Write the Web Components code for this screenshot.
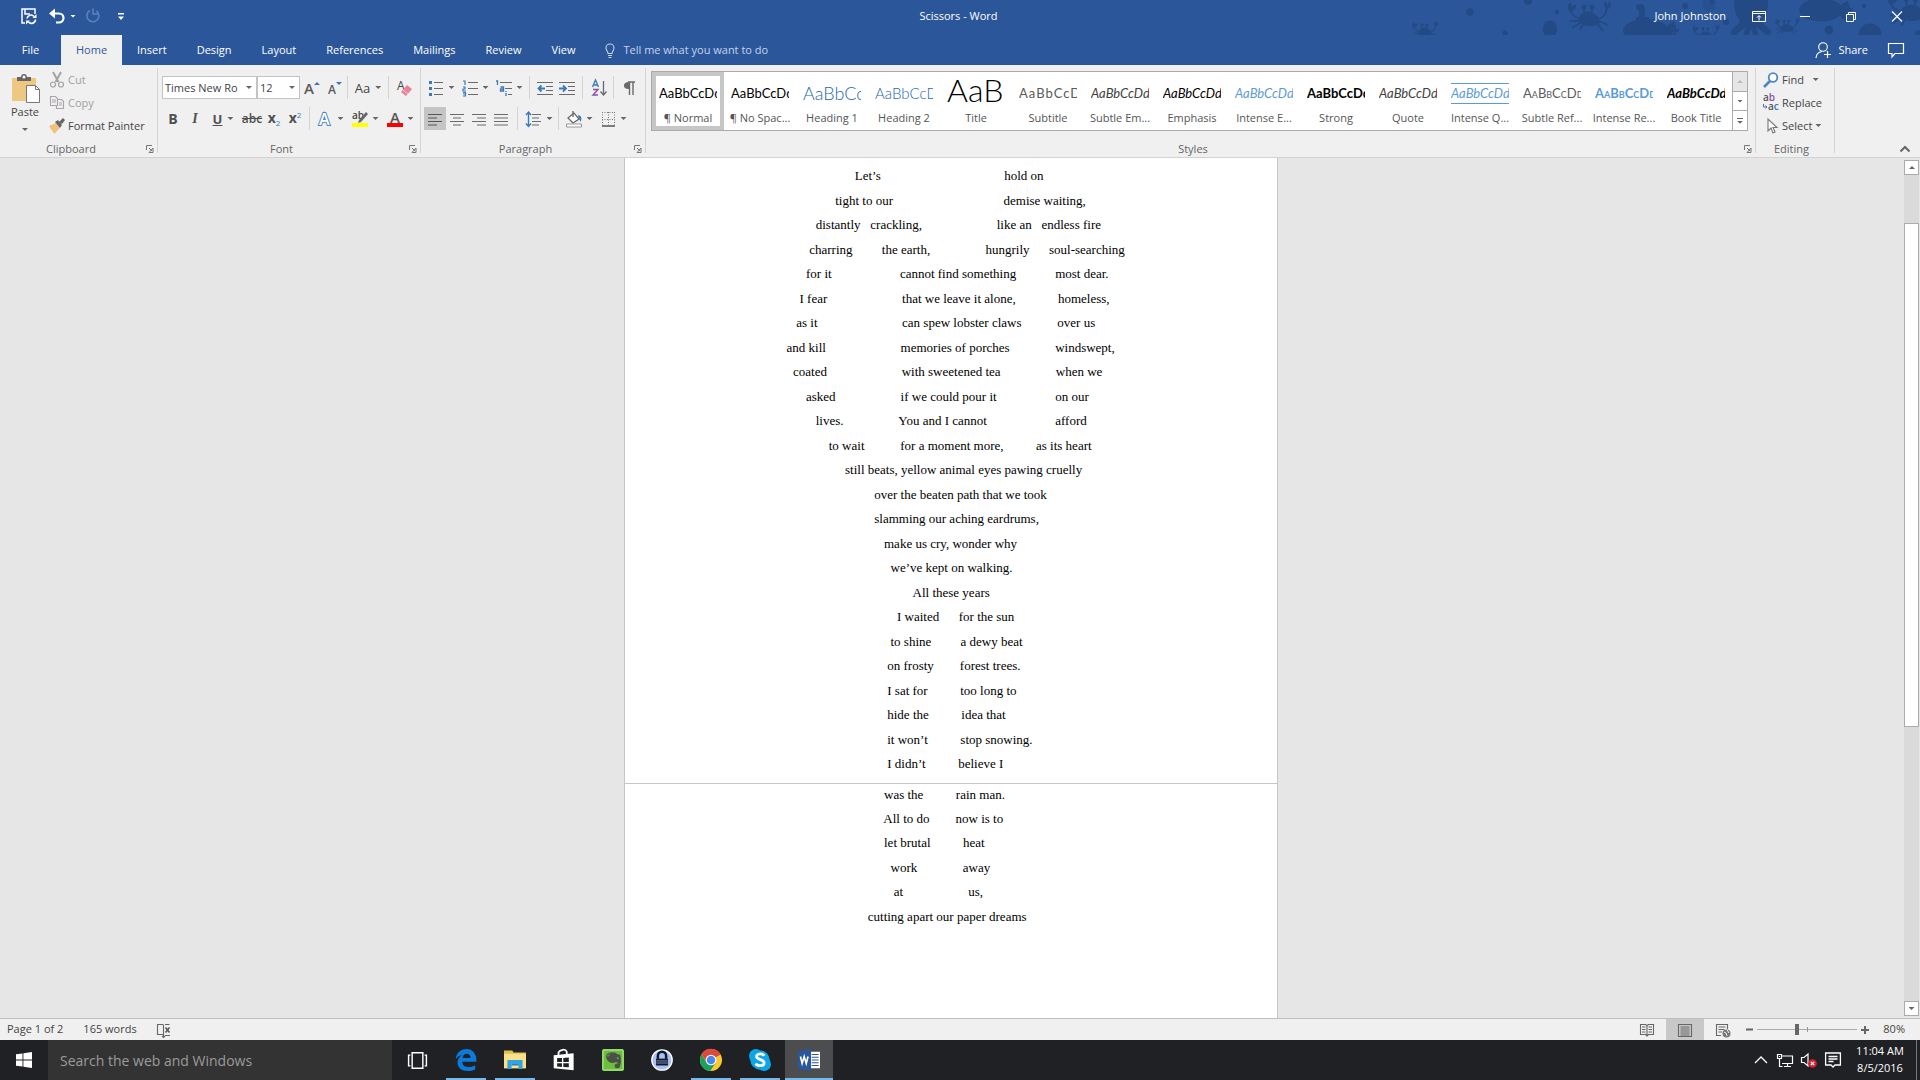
<!DOCTYPE html>
<html lang="en">
<head>
<meta charset="utf-8">
<title>Scissors - Word</title>
<style>
  html, body { margin: 0; height: 100%; }
  body { font: 11px/16px "Open Sans", "Noto Sans", sans-serif; color: #444; background: #e6e6e6; overflow: hidden; }
</style>
</head>
<body>
<word-app></word-app>

<script>
const ICONS = {
  save: '<path d="M14 6V1H1v14h3M4 1v5h5" fill="none" stroke="#fff" stroke-width="1.5"/><path d="M6 10.500a4 4 0 0 1 7-2M14.500 11.500a4 4 0 0 1-7 2.500" fill="none" stroke="#fff" stroke-width="1.600"/><path d="M15.500 6v4h-4zM5 16.500v-4h4z" fill="#fff"/>',
  undo: '<path d="M3 5.500h7a4 4 0 0 1 0 9H7" fill="none" stroke="#fff" stroke-width="2.200"/><path d="M0 5.500L6 .5v10z" fill="#fff"/>',
  redo: '<path d="M5 2.500A6 6 0 1 0 11.500 3" fill="none" stroke="#5d81bd" stroke-width="1.600"/><path d="M8 .5v5.500h5" fill="none" stroke="#5d81bd" stroke-width="1.600"/>',
  custom: '<path d="M5 5h6v1.500H5z" fill="#fff"/><path d="M5 8.500h6L8 12z" fill="#fff"/>',
  ribbonopt: '<path d="M1.500 3.500h13v10h-13zM1.500 5.500h13M8 12.500V8M6 9.500l2-2 2 2" fill="none" stroke="#fff"/>',
  minimize: '<path d="M3 8.500h10" stroke="#fff"/>',
  restore: '<path d="M3.500 6.500h7v7h-7zM5.500 6V4.500h7v7H11" fill="none" stroke="#fff"/>',
  close: '<path d="M3 3.500l10 10M13 3.500l-10 10" stroke="#fff" stroke-width="1.100"/>',
  bulb: '<path d="M6 11.500c0-2-2-3-2-5.500a4 4 0 0 1 8 0c0 2.500-2 3.500-2 5.500zM6 13.500h4M6.500 15.500h3" fill="none" stroke="#c5d3ea" stroke-width="1.100"/>',
  share: '<circle cx="8" cy="5" r="4.300" fill="none" stroke="#fff" stroke-width="1.100"/><path d="M1 16c.3-4 2.500-6 6-6.500M12.500 9v7M9 12.500h7" fill="none" stroke="#fff" stroke-width="1.200"/>',
  comment: '<path d="M.5 1.500h15v10H7l-3 3.500v-3.500H.5z" fill="none" stroke="#fff" stroke-width="1.200"/>',
  cut: '<path d="M4 0l5.500 10M12 0L6.500 10" stroke="#a3a3a3" stroke-width="2"/><circle cx="4" cy="12.500" r="2.500" fill="none" stroke="#a3a3a3" stroke-width="1.200"/><circle cx="12" cy="12.500" r="2.500" fill="none" stroke="#a3a3a3" stroke-width="1.200"/>',
  copy: '<path d="M1.500 1.500h5l2 2v7h-7zM3 5h4M3 7h4M8.500 4.500h4l2 2v7H7.500v-3M10 8h3M10 10h3" fill="none" stroke="#aaa3ac" stroke-width="1.100"/>',
  brush: '<path d="M0 8l7-3 4 5-6 6c-1-3-3-4-5-8z" fill="#eec27c"/><path d="M6 4l3-2 4 5-2 3zM10 4l4-4 2 2-3 4z" fill="#666"/>',
  growA: '<text x="0" y="14" font-size="15" font-weight="600" fill="#5a5a5a">A</text><path d="M10 5h6l-3-3z" fill="#3b79b8"/>',
  shrinkA: '<text x="2" y="14" font-size="12" font-weight="600" fill="#5a5a5a">A</text><path d="M10 2h6l-3 3z" fill="#3b79b8"/>',
  clear: '<text x="0" y="10" font-size="12" fill="#444">A</text><path d="M10 5l5 4-6 7-5-4z" fill="#e8829a"/><path d="M6 10l5 4" stroke="#f6c6d0"/>',
  wordart: '<text x="2" y="14" font-size="16" font-weight="600" fill="#fff" stroke="#4f87c4" stroke-width="2" paint-order="stroke">A</text>',
  mark: '<text x="0" y="8" font-size="10" font-weight="600" fill="#444">ab</text><path d="M14 1l2 2-7 8-3 1 1-3z" fill="#666"/><path d="M0 12h16v4H0z" fill="#ff0"/>',
  fontcolor: '<text x="3" y="12" font-size="15" font-weight="600" fill="#555">A</text><path d="M0 12h16v4H0z" fill="#f00"/>',
  bullets: '<path d="M6 2.500h9M6 8.500h9M6 14.500h9" stroke="#6a6a6a" stroke-width="1.200"/><path d="M1 1h3v3H1zM1 7h3v3H1zM1 13h3v3H1z" fill="#3b79b8"/>',
  numbering: '<path d="M6 2.500h10M6 8.500h10M6 14.500h10" stroke="#6a6a6a" stroke-width="1.200"/><path d="M1 1h2v4M1 7h2v2H1v2h3M1 12.500h2.500v3.500H1M1 14h2" fill="none" stroke="#3b79b8" stroke-width="1.200"/>',
  multilevel: '<path d="M4 2.500h12M9 8.500h7M12 14.500h4" stroke="#6a6a6a" stroke-width="1.200"/><path d="M0 1h1.500v4M4.500 7h3v4h-3V9h3M10 11v1M10 13v3" fill="none" stroke="#3b79b8" stroke-width="1.300"/>',
  outdent: '<path d="M0 2.500h16M9 6.500h7M9 10.500h7M0 14.500h16" stroke="#6a6a6a" stroke-width="1.200"/><path d="M8 8.500H2M4.500 5.500l-3 3 3 3" fill="none" stroke="#3b79b8" stroke-width="1.800"/>',
  indent: '<path d="M0 2.500h16M9 6.500h7M9 10.500h7M0 14.500h16" stroke="#6a6a6a" stroke-width="1.200"/><path d="M0 8.500h6M4 5.500l3 3-3 3" fill="none" stroke="#3b79b8" stroke-width="1.800"/>',
  sort: '<path d="M1.500 7L4.500 0l3 7M2.500 5h4" fill="none" stroke="#3b79b8" stroke-width="1.300"/><path d="M2 9.500h5L2 15h5" fill="none" stroke="#8a4fa8" stroke-width="1.400"/><path d="M12.500 1v14M9.500 11.500l3 3.500 3-3.500" fill="none" stroke="#6a6a6a" stroke-width="1.300"/>',
  pilcrow: '<path d="M8.500 2v13M12 2v13M7 2h7" stroke="#6a6a6a" stroke-width="1.400"/><path d="M8.500 2v7C1 10 1 1.500 8.500 2z" fill="#6a6a6a"/>',
  alignleft: '<path d="M1 3.500h14M1 7h9M1 10.500h14M1 14h9" stroke="#555" stroke-width="1.200"/>',
  aligncenter: '<path d="M1 3.500h14M4 7h8M1 10.500h14M4 14h8" stroke="#6a6a6a" stroke-width="1.200"/>',
  alignright: '<path d="M1 3.500h14M6 7h9M1 10.500h14M6 14h9" stroke="#6a6a6a" stroke-width="1.200"/>',
  justify: '<path d="M1 3.500h14M1 7h14M1 10.500h14M1 14h14" stroke="#6a6a6a" stroke-width="1.200"/>',
  spacing: '<path d="M6 3.500h9M6 7h7M6 10.500h9M6 14h7" stroke="#6a6a6a" stroke-width="1.200"/><path d="M2.500 1v14M0 4l2.500-3L5 4M0 12.500L2.500 15.500 5 12.500" fill="none" stroke="#3b79b8" stroke-width="1.400"/>',
  shading: '<path d="M2 7l6-5 5 6-6 4z" fill="#fff" stroke="#666" stroke-width="1.200"/><path d="M7 6V0" stroke="#666" stroke-width="1.300"/><path d="M12 4c4 1 4 4 2.500 7-.5-2-1-3-2-4z" fill="#3b79b8"/><path d="M.5 13h15v3H.5z" fill="#fff" stroke="#999"/>',
  borders: '<path d="M2 1.500h13M2.500 1v13M14.500 1v13M8.500 1v13M2 8.500h13" stroke="#777" stroke-dasharray="1 1.500"/><path d="M2 15h13" stroke="#555" stroke-width="1.500"/>',
  find: '<circle cx="10" cy="5.500" r="4.300" fill="#fff" stroke="#4f87c4" stroke-width="1.800"/><path d="M7 9l-6 6" stroke="#4f87c4" stroke-width="2.600"/>',
  replace: '<text x="0" y="6" font-size="10" font-weight="600" fill="#555">a<tspan fill="#8a4fa8">b</tspan></text><text x="5" y="15" font-size="10" font-weight="600" fill="#555">a<tspan fill="#3b79b8">c</tspan></text><path d="M.5 9v3h3M2.500 10.500L4 12l-1.500 1.500" fill="none" stroke="#3b79b8"/>',
  select: '<path d="M5 1v12l3-3 2 5 2-1-2-4.500h4z" fill="#fff" stroke="#777" stroke-width="1.100"/>',
  proof: '<path d="M8 2.500H2.500v10H8M8.500 2.500v12.500M7 14l1.500 1.500 1.500-1.500M10 2.500h4.500M10 13.500h5" fill="none" stroke="#666" stroke-width="1.100"/><path d="M10.500 5.500l4 5M14.500 5.500l-4 5" stroke="#555" stroke-width="1.500"/>',
  readmode: '<path d="M8 3.500L6.500 2.500h-5v10h5L8 14l1.500-1.500h5v-10h-5zM8 3v11M3 5h3.500M3 7.500h3.500M3 10h3.500M9.500 5H13M9.500 7.500H13M9.500 10H13" fill="none" stroke="#666" stroke-width="1.100"/>',
  printlayout: '<path d="M1.500 2.500h13v12h-13zM3.500 5h9M3.500 7h9M3.500 9h9M3.500 11h9M3.500 13h9" fill="none" stroke="#666" stroke-width="1.100"/>',
  weblayout: '<path d="M6 13.500H1.500v-11h11V7M3.500 5h7M3.500 7.500h6M3.500 10H7" fill="none" stroke="#666" stroke-width="1.100"/><circle cx="11.500" cy="11.500" r="4" fill="#777"/><path d="M9 10l2 1 1 3M12 8l2 3" fill="none" stroke="#f0f0f0"/>',
  collapse: '<path d="M3.500 10.500L8 6l4.500 4.500" fill="none" stroke="#666" stroke-width="2"/>',
  windows: '<path d="M0 2.300L6.500 1.400v6.100H0zM7.400 1.300L16 0v7.500H7.400zM0 8.400h6.500v6.200L0 13.700zM7.400 8.400H16V16l-8.600-1.200z" fill="#fff"/>',
  taskview: '<path d="M3.500 1.500h9v13h-9zM2 3.500H.5v9H2M14 3.500h1.500v9H14" fill="none" stroke="#fff" stroke-width="1.200"/>',
  edge: '<path d="M.5 7.500C1 3 4 0 8.300 0 13 0 15.800 3.500 15.500 9.200H5.300c.2 2.800 2.200 3.900 4.700 3.900 1.700 0 3.300-.5 4.700-1.300v3.100C13 15.700 11.200 16 9.300 16 4.800 16 1.800 13.500 1.800 9.800c0-2.300 1.400-4.400 3.700-5.400C3.500 4.600 1.800 5.700.5 7.500zm5-.9h5.800c0-2-1-3.200-2.800-3.200S5.600 4.800 5.500 6.600z" fill="#0a7bdb"/>',
  explorer: '<path d="M0 1h6l1 1.500h9V14H0z" fill="#e8bc50"/><path d="M0 3.500h16V14H0z" fill="#fbe08c"/><path d="M2.500 14.500V8h11v6.500h-3V11h-5v3.500z" fill="#2fa4e7"/><path d="M5.500 11h5v1h-5z" fill="#1878b8"/>',
  store: '<path d="M.5 4.500L15 3v12.500L.5 14z" fill="#fff"/><path d="M4 5V2.500C5 .5 9-.5 10 2v2" fill="none" stroke="#fff" stroke-width="1.300"/><path d="M3 6.500h3.500v3H3zM7.500 6.500l4-.3v3.300h-4zM3 10.300h3.500v2.700L3 12.800zM7.500 10.300h4v3l-4-.3z" fill="#202124"/>',
  evernote: '<rect width="16" height="16" rx="1.500" fill="#6bbf3c"/><rect x=".7" y=".7" width="14.600" height="14.600" rx="1" fill="none" stroke="#a4e07c"/><path d="M5.500 2.500h4L11 3.600l2.200.6c.9 3 .7 7-.4 9.300-1.800.8-3.600.5-3.600-1.200 0-1.300 1.200-1.900 2.400-1.600-.2-1.400-1.600-1.200-2.300-.9-2 .9-5-.3-6-2.800l-.5-1.700h2.500z" fill="#4b5148"/><path d="M2.500 4.700L5 2.500v2.200z" fill="#4b5148"/><path d="M10.500 6l1.700.6-.6.900z" fill="#9ad774"/>',
  keepass: '<circle cx="8" cy="8" r="7.400" fill="#a9c0f5" stroke="#fff"/><path d="M5 7V5a3 3 0 0 1 6 0v2" fill="none" stroke="#101828" stroke-width="1.800"/><path d="M3.700 7h8.600v5H3.700z" fill="#101828"/><path d="M4 8.700h8M4 10.200h8" stroke="#a9c0f5" stroke-width=".5"/>',
  chrome: '<circle cx="8" cy="8" r="8" fill="#fbc92f"/><path d="M8 8L1.100 4A8 8 0 0 1 15 4z" fill="#dc4a3d"/><path d="M8 4h7a8 8 0 0 0-14-.1l4 6z" fill="#dc4a3d"/><path d="M1.100 4A8 8 0 0 0 7.500 16l3.900-6L8 9 4.500 9.500z" fill="#1ba15e"/><circle cx="8" cy="8" r="3.900" fill="#fff"/><circle cx="8" cy="8" r="3.100" fill="#4a88f0"/>',
  skype: '<circle cx="5" cy="5" r="5" fill="#0ba7e8"/><circle cx="11" cy="11" r="5" fill="#0ba7e8"/><circle cx="8" cy="8" r="7" fill="#0ba7e8"/><path d="M11 5C10 3 5.500 3.200 5.500 5.500c0 2.700 5.500 1.800 5.500 4.600C11 12.500 6 13 5 10.500" fill="none" stroke="#fff" stroke-width="2"/>',
  word: '<path d="M9 2h7v12H9z" fill="#fff"/><path d="M10 4h5M10 6h5M10 8h5M10 10h5M10 12h5" stroke="#2b579a" stroke-width=".9"/><path d="M0 1.500L9.500 0v16L0 14.500z" fill="#2b579a"/><path d="M1.800 5.500L3 10.500l1.500-5 1.500 5 1.300-5" fill="none" stroke="#fff" stroke-width="1.200"/>',
  chevup: '<path d="M2 11l6-6 6 6" fill="none" stroke="#fff" stroke-width="1.300"/>',
  network: '<path d="M5 4h10.500v7.500H5M10.500 12v2.500M7 14.500h7M.5 2.500h4v4h-4zM2.500 6.500v8h3M2 4.500h1" fill="none" stroke="#fff" stroke-width="1.200"/>',
  volume: '<path d="M.5 5.500h2.500l4-3.500v12L3 10.500H.5z" fill="none" stroke="#fff" stroke-width="1.200"/><circle cx="11.500" cy="11.500" r="4.300" fill="#d8202f"/><path d="M9.800 9.800l3.400 3.400M13.200 9.800l-3.400 3.400" stroke="#fff" stroke-width="1.200"/>',
  notify: '<path d="M.6 1h14.800v12H10l-2 2-2-2H.6zM3.500 4.500h9M3.500 7h9M3.500 9.500h5" fill="none" stroke="#fff" stroke-width="1.300"/>'
};

/* Registers an element whose open shadow root is cloned from a template; `fill` may finish it. */
function element(name, css, html, fill) {
  const template = document.createElement('template');
  template.innerHTML = `<style>*{box-sizing:border-box}button,input,select{font:inherit;color:inherit;margin:0;padding:0;border:0;background:none}:host([hidden]){display:none}${css}</style>${html}`;
  customElements.define(name, class extends HTMLElement {
    connectedCallback() {
      if (this.shadowRoot) return;
      this.attachShadow({ mode: 'open' }).append(template.content.cloneNode(true));
      if (fill) fill(this, this.shadowRoot);
    }
  });
}

element('ui-icon', ':host{display:block;flex:none;width:var(--icon,16px);height:var(--icon,16px)}svg{display:block;width:100%;height:100%;overflow:visible}',
  '<svg viewBox="0 0 16 16" aria-hidden="true"></svg>',
  (host, root) => { root.querySelector('svg').innerHTML = ICONS[host.getAttribute('name')]; });

element('ui-caret', ':host{display:block;flex:none;width:6px;height:3px;background:var(--caret,#666);clip-path:polygon(0 0,100% 0,50% 100%)}', '');

element('tool-button', `
  :host{display:block;flex:none;width:var(--w,24px);height:23px}
  button{display:flex;align-items:center;justify-content:center;gap:5px;width:100%;height:100%;white-space:nowrap}
  :host([pressed]) button{background:#c5c5c5}
  :host([wide]) button{justify-content:flex-start;gap:3px}
`, '<button type="button"><slot></slot></button>', (host, root) => {
  const b = root.querySelector('button');
  b.setAttribute('aria-label', host.getAttribute('label'));
  if (host.hasAttribute('icon')) b.insertAdjacentHTML('afterbegin', `<ui-icon name="${host.getAttribute('icon')}"></ui-icon>`);
  if (host.hasAttribute('caret')) b.insertAdjacentHTML('beforeend', '<ui-caret></ui-caret>');
});

element('tool-rule', ':host{display:block;flex:none;width:var(--w,7px);height:23px;background:linear-gradient(#d4d4d4,#d4d4d4) center/1px 100% no-repeat}', '');

element('ribbon-group', `
  :host{display:flex;flex-direction:column;padding-top:3px;height:92px}
  .in{flex:1;display:flex;flex-direction:column;border-right:1px solid #d4d4d4;margin-bottom:4px}
  .body{flex:1;min-height:0}
  .foot{display:flex;height:9px;align-items:center;color:#666;padding-right:3px}
  .foot span{flex:1;text-align:center;margin-right:4px}
  .foot button{width:8px;height:8px}
  svg{display:block;width:8px;height:8px}
`, `<div class="in"><div class="body"><slot></slot></div><div class="foot"><span></span><button type="button"><svg viewBox="0 0 8 8"><path d="M.5 5V.5H6M3 3l3 3M7 3v4.500H3z" fill="none" stroke="#777"/></svg></button></div></div>`,
(host, root) => {
  root.querySelector('span').textContent = host.getAttribute('label');
  const b = root.querySelector('button');
  if (host.hasAttribute('plain')) b.remove(); else b.setAttribute('aria-label', host.getAttribute('label') + ' settings');
});

element('combo-box', `
  :host{display:block;flex:none;width:var(--w);height:23px;position:relative}
  select{appearance:none;width:100%;height:100%;border:1px solid #c3c3c3;background:#fff;padding:0 0 0 2px;border-radius:0}
  ui-caret{position:absolute;right:5px;top:10px;pointer-events:none}
`, '<select></select><ui-caret></ui-caret>', (host, root) => {
  const s = root.querySelector('select');
  s.setAttribute('aria-label', host.getAttribute('label'));
  s.add(new Option(host.getAttribute('value')));
});

element('sea-pattern', ':host{display:block;position:absolute;top:0;right:0;width:520px;height:65px;overflow:hidden;pointer-events:none}svg{display:block}', `
  <svg width="520" height="65" viewBox="0 0 520 65" fill="#234a84" aria-hidden="true">
    <defs><g id="crab"><path d="M-11 3c0-14 20-14 22 1-6 4-16 4-22-1z"/><path d="M-9 0c-5-2-8-4-10-9M9 0c6-2 8-5 9-11M-10 2h-9M-9 4l-8 5M-6 5l-3 6M8 4l6 8M10 2l9 4M-5-7v-5M3-7v-5" fill="none" stroke="#234a84" stroke-width="1.800"/><path d="M-20-8c-3-4 0-9 2-8l1 4 3-3c3 4-1 8-6 7zM17-10c-3-3-2-8 0-8l1 4 3-4c3 5-1 9-4 8z"/><circle cx="-5" cy="-12" r="2.500"/><circle cx="3" cy="-12" r="2.500"/></g>
    <g id="octo"><path d="M-17-16c0-28 34-28 34 0 0 8-4 14-6 17 3 6 8 6 9 11 0 5-5 5-7 1l-8-6c1 4 4 7 2 11-3 3-6 0-5-3l-2-7-2 7c1 3-2 6-5 3-2-4 1-7 2-11l-8 6c-2 4-7 4-7-1 1-5 6-5 9-11-2-3-6-9-6-17z"/></g>
    <g id="sub"><ellipse cx="0" cy="0" rx="23" ry="12"/><path d="M-10-9v-5h3v-7c-3 0-4-3-2-5 5-2 8 0 8 4v8h4v6zM16-2l12-8c2 5 0 7-3 9 3 4 4 8 2 13-5-2-7-6-8-9zM25-2h8v3h-8zM28-6h2v12h-2z"/></g></defs>
    <circle cx="128" cy="1" r="4"/><circle cx="70" cy="12" r="3.700"/><circle cx="105" cy="33" r="2.700"/><circle cx="157" cy="12" r="2.200"/><circle cx="285" cy="6" r="3"/><circle cx="326" cy="22" r="3"/><circle cx="464" cy="6" r="2.200"/><circle cx="429" cy="30" r="4.500"/><circle cx="470" cy="35" r="11.500"/><circle cx="518" cy="33" r="3"/><circle cx="309" cy="5" r="7" opacity=".4"/><circle cx="312" cy="2" r="2.500"/>
    <use href="#crab" transform="translate(189 19)"/><use href="#crab" transform="translate(25 32) scale(.6)"/><use href="#crab" transform="translate(306 36) scale(.62)"/><use href="#crab" transform="translate(387 28) scale(.56)"/><use href="#crab" transform="translate(512 13) scale(1.150)"/>
    <use href="#octo" transform="translate(351 20)"/><use href="#octo" transform="translate(150 36) scale(.42)"/>
    <use href="#sub" transform="translate(246 31)"/><use href="#sub" transform="translate(421 10) scale(.95)"/>
  </svg>`);

element('title-bar', `
  :host{display:grid;grid-template-columns:1fr auto 1fr;align-items:center;height:35px;background:#2b579a;color:#fff;position:relative;padding:0 3px 3px 0}
  .quick{display:flex;align-items:center;padding-left:21px;--caret:#fff}
  .quick button{display:flex;align-items:center;gap:5px;height:28px}
  .quick button + button{margin-left:12px}
  .quick button:nth-child(3){margin-left:9px}
  .win{display:flex;justify-content:flex-end;align-items:center;position:relative;margin-right:-3px}
  .win button{display:grid;place-items:center;width:46px;height:30px}
  .user{padding-right:10px}
`, `<sea-pattern></sea-pattern>
  <div class="quick"><button aria-label="Save"><ui-icon name="save"></ui-icon></button><button aria-label="Undo"><ui-icon name="undo"></ui-icon><ui-caret></ui-caret></button><button aria-label="Redo"><ui-icon name="redo"></ui-icon></button><button aria-label="Customize"><ui-icon name="custom"></ui-icon></button></div>
  <span><slot></slot></span>
  <div class="win"><span class="user"><slot name="user"></slot></span><button aria-label="Ribbon options"><ui-icon name="ribbonopt"></ui-icon></button><button aria-label="Minimize"><ui-icon name="minimize"></ui-icon></button><button aria-label="Restore"><ui-icon name="restore"></ui-icon></button><button aria-label="Close"><ui-icon name="close"></ui-icon></button></div>`);

element('ribbon-tabs', `
  :host{display:flex;height:30px;background:#2b579a;color:#fff;position:relative;padding-right:12px}
  button{height:30px;padding:0 15px;white-space:nowrap}
  .file{width:61px}
  .on{background:#f0f0f0;color:#2b579a;width:61px}
  .ask,.share,.note{display:flex;align-items:center;gap:8px}
  .ask{color:#c5d3ea;gap:5px;padding:0 12px}
  .space{flex:1}
  .share{padding:0 10px;gap:7px}
  .note{padding:0 4px 0 10px}
`, `<button class="file">File</button><button class="on">Home</button><button>Insert</button><button>Design</button><button>Layout</button><button>References</button><button>Mailings</button><button>Review</button><button>View</button>
  <button class="ask"><ui-icon name="bulb"></ui-icon>Tell me what you want to do</button><span class="space"></span>
  <button class="share"><ui-icon name="share"></ui-icon>Share</button><button class="note" aria-label="Comments"><ui-icon name="comment"></ui-icon></button>`);

element('style-tile', `
  :host{display:block;flex:1;min-width:0;height:58px}
  button{display:block;width:100%;height:100%;border:4px solid transparent;padding:0 3px;text-align:center}
  :host([on]) button{border-color:#c6c6c6}
  .sample{display:flex;align-items:center;height:28px;margin:3px 0;overflow:hidden;white-space:nowrap;font-family:Lato,"Open Sans",sans-serif;font-size:13px;line-height:19px;color:#000}
  .name{display:block;white-space:nowrap;margin:0 -6px;color:#555}
`, '<button type="button"><span class="sample"><span></span></span><span class="name"></span></button>', (host, root) => {
  const s = root.querySelector('.sample span');
  s.textContent = host.getAttribute('sample') || 'AaBbCcDd';
  s.style.cssText = host.dataset.look || '';
  root.querySelector('.name').textContent = host.getAttribute('name');
});

element('style-gallery', `
  :host{display:flex;height:60px;border:1px solid #ababab;background:#fff;margin:3px 7px 0 5px}
  .tiles{flex:1;display:flex;min-width:0}
  .scroll{display:flex;flex-direction:column;width:15px;border-left:1px solid #ababab}
  .scroll button{flex:1;display:flex;flex-direction:column;align-items:center;justify-content:center;gap:2px}
  .scroll button + button{border-top:1px solid #ababab}
  .scroll button:first-child{background:#e6e6e6;--caret:#bbb}
  .up{transform:rotate(180deg)}
  i{width:6px;height:1px;background:#666}
`, '<div class="tiles"><slot></slot></div><div class="scroll"><button aria-label="Previous styles"><ui-caret class="up"></ui-caret></button><button aria-label="Next styles"><ui-caret></ui-caret></button><button aria-label="More styles"><i></i><ui-caret></ui-caret></button></div>');

const STYLES = [
  ['¶ Normal', ''], ['¶ No Spac...', ''], ['Heading 1', 'font-size:18px;font-weight:300;color:#1f69b3', 'AaBbCc'],
  ['Heading 2', 'font-size:15px;font-weight:300;color:#1f69b3', 'AaBbCcD'], ['Title', 'font-size:32px;font-weight:300;padding-bottom:8px', 'AaB'],
  ['Subtitle', 'color:#5a5a5a;letter-spacing:1px', 'AaBbCcD'], ['Subtle Em...', 'font-style:italic;color:#404040'], ['Emphasis', 'font-style:italic'],
  ['Intense E...', 'font-style:italic;color:#5b9bd5'], ['Strong', 'font-weight:700'], ['Quote', 'font-style:italic;color:#404040'],
  ['Intense Q...', 'font-style:italic;color:#5b9bd5;border:solid #5b9bd5;border-width:1px 0'],
  ['Subtle Ref...', 'font-variant:small-caps;color:#5a5a5a'], ['Intense Re...', 'font-variant:small-caps;font-weight:700;color:#5b9bd5'],
  ['Book Title', 'font-weight:700;font-style:italic']
];

element('word-ribbon', `
  :host{display:flex;height:93px;background:#f0f0f0;border-bottom:1px solid #d2d2d2;position:relative}
  .row{display:flex;height:23px;align-items:center}
  .tools{display:flex;flex-direction:column;gap:8px;padding:8px 0 0 4px}
  .para{padding-left:3px}
  .clip{display:flex;padding:0 0 0 4px}
  .paste{display:flex;flex-direction:column;align-items:center;width:42px;height:72px;padding-top:5px}
  .paste svg{width:30px;height:31px;margin-left:2px}
  .paste ui-caret{margin-top:8px}
  .list{display:flex;flex-direction:column;--w:100%}
  .clip .list{flex:1;margin-left:3px}
  .off{color:#a0a0a0}
  .edit{padding-left:7px}
  ribbon-group.grow{flex:1;min-width:0}
  .fold{position:absolute;right:7px;bottom:0;height:16px}
  b,i,u,s{font-size:13px;color:#505050}
  b{font-size:14px}
  i{font:italic 700 14px "Liberation Serif",serif}
  u{font-weight:700}
  s{font-size:12px;font-weight:600}
  sub,sup{font-size:8px;color:#3b79b8;line-height:0}
`, `
  <ribbon-group label="Clipboard" style="width:158px"><div class="clip">
    <button class="paste"><svg viewBox="0 0 30 31" aria-hidden="true"><path d="M1 5h24v23H1z" fill="#eec881"/><path d="M6 8V4h4c0-4 6-4 6 0h4v4z" fill="#666"/><circle cx="13" cy="4" r="1.500" fill="#fff"/><path d="M15.500 12.500h9l4 4v13h-13z" fill="#fff" stroke="#777"/><path d="M24.500 12.500v4h4" fill="none" stroke="#777"/></svg>Paste<ui-caret></ui-caret></button>
    <div class="list"><tool-button class="off" wide icon="cut" label="Cut">Cut</tool-button><tool-button class="off" wide icon="copy" label="Copy">Copy</tool-button><tool-button wide icon="brush" label="Format Painter">Format Painter</tool-button></div>
  </div></ribbon-group>
  <ribbon-group label="Font" style="width:263px"><div class="tools">
    <div class="row"><combo-box style="--w:95px" label="Font" value="Times New Ro"></combo-box><combo-box style="--w:43px" label="Font size" value="12"></combo-box><tool-button icon="growA" label="Grow font"></tool-button><tool-button style="--w:20px" icon="shrinkA" label="Shrink font"></tool-button><tool-rule></tool-rule><tool-button style="--w:34px" caret label="Change case"><span style="font-size:13px">Aa</span></tool-button><tool-rule></tool-rule><tool-button style="--w:26px" icon="clear" label="Clear formatting"></tool-button></div>
    <div class="row"><tool-button style="--w:22px" label="Bold"><b>B</b></tool-button><tool-button style="--w:22px" label="Italic"><i>I</i></tool-button><tool-button style="--w:34px" caret label="Underline"><u>U</u></tool-button><tool-button label="Strikethrough"><s>abc</s></tool-button><tool-button style="--w:20px" label="Subscript"><span><b>x</b><sub>2</sub></span></tool-button><tool-button style="--w:22px" label="Superscript"><span><b>x</b><sup>2</sup></span></tool-button><tool-rule></tool-rule><tool-button style="--w:34px" caret icon="wordart" label="Text effects"></tool-button><tool-button style="--w:36px" caret icon="mark" label="Highlight"></tool-button><tool-button style="--w:34px" caret icon="fontcolor" label="Font color"></tool-button></div>
  </div></ribbon-group>
  <ribbon-group label="Paragraph" style="width:225px"><div class="tools para">
    <div class="row"><tool-button style="--w:34px" caret icon="bullets" label="Bullets"></tool-button><tool-button style="--w:34px" caret icon="numbering" label="Numbering"></tool-button><tool-button style="--w:34px" caret icon="multilevel" label="Multilevel list"></tool-button><tool-rule></tool-rule><tool-button icon="outdent" label="Decrease indent"></tool-button><tool-button style="--w:20px" icon="indent" label="Increase indent"></tool-button><tool-rule style="--w:11px"></tool-rule><tool-button style="--w:22px" icon="sort" label="Sort"></tool-button><tool-rule></tool-rule><tool-button icon="pilcrow" label="Show marks"></tool-button></div>
    <div class="row"><tool-button pressed style="--w:22px" icon="alignleft" label="Align left"></tool-button><tool-button style="--w:22px" icon="aligncenter" label="Center"></tool-button><tool-button style="--w:22px" icon="alignright" label="Align right"></tool-button><tool-button style="--w:22px" icon="justify" label="Justify"></tool-button><tool-rule style="--w:11px"></tool-rule><tool-button style="--w:32px" caret icon="spacing" label="Line spacing"></tool-button><tool-rule></tool-rule><tool-button style="--w:34px" caret icon="shading" label="Shading"></tool-button><tool-button style="--w:34px" caret icon="borders" label="Borders"></tool-button></div>
  </div></ribbon-group>
  <ribbon-group class="grow" label="Styles"><style-gallery></style-gallery></ribbon-group>
  <ribbon-group plain label="Editing" style="width:79px"><div class="list edit"><tool-button wide caret icon="find" label="Find">Find&nbsp;&nbsp;</tool-button><tool-button wide icon="replace" label="Replace">Replace</tool-button><tool-button wide caret icon="select" label="Select">Select</tool-button></div></ribbon-group>
  <div style="width:85px"></div>
  <button class="fold" aria-label="Collapse the ribbon"><ui-icon name="collapse"></ui-icon></button>
`, (host, root) => {
  root.querySelector('style-gallery').innerHTML = STYLES.map(([n, look, sample], k) =>
    `<style-tile name="${n}" data-look="${look}"${sample ? ` sample="${sample}"` : ''}${k ? '' : ' on'}></style-tile>`).join('');
});

/* Each verse alternates a count of leading spaces with the words that follow. */
const VERSES = [
  [[47, 'Let’s', 38, 'hold on'], [41, 'tight to our', 34, 'demise waiting,'], [35, 'distantly', 3, 'crackling,', 23, 'like an', 3, 'endless fire'],
   [33, 'charring', 9, 'the earth,', 17, 'hungrily', 6, 'soul-searching'], [32, 'for it', 21, 'cannot find something', 12, 'most dear.'],
   [30, 'I fear', 23, 'that we leave it alone,', 13, 'homeless,'], [29, 'as it', 26, 'can spew lobster claws', 11, 'over us'],
   [26, 'and kill', 23, 'memories of porches', 14, 'windswept,'], [28, 'coated', 23, 'with sweetened tea', 17, 'when we'],
   [32, 'asked', 20, 'if we could pour it', 18, 'on our'], [35, 'lives.', 17, 'You and I cannot', 21, 'afford'],
   [39, 'to wait', 11, 'for a moment more,', 10, 'as its heart'], [44, 'still beats, yellow animal eyes pawing cruelly'],
   [53, 'over the beaten path that we took'], [53, 'slamming our aching eardrums,'], [56, 'make us cry, wonder why'],
   [58, 'we’ve kept on walking.'], [65, 'All these years'], [60, 'I waited', 6, 'for the sun'], [58, 'to shine', 9, 'a dewy beat'],
   [57, 'on frosty', 8, 'forest trees.'], [57, 'I sat for', 10, 'too long to'], [57, 'hide the', 10, 'idea that'],
   [57, 'it won’t', 10, 'stop snowing.'], [57, 'I didn’t', 10, 'believe I']],
  [[56, 'was the', 10, 'rain man.'], [56, 'All to do', 8, 'now is to'], [56, 'let brutal', 10, 'heat'], [58, 'work', 14, 'away'],
   [59, 'at', 20, 'us,'], [51, 'cutting apart our paper dreams']]
];

element('poem-page', `
  :host{display:block;background:#fff;border:1px solid #c6c6c6;border-top:0;border-bottom:0;padding:6px 0 7px 77px;color:#000;font:13px/24px "Liberation Serif","Times New Roman",serif}
  p{margin:0;white-space:pre;line-height:24px}
  p:nth-of-type(even){line-height:25px}
  :host([continued]) p:first-of-type{line-height:22px}
`, '', (host, root) => {
  for (const verse of VERSES[host.getAttribute('page')]) {
    const p = document.createElement('p');
    for (let k = 0; k < verse.length; k += 2) {
      const words = document.createElement('span');
      words.textContent = verse[k + 1];
      p.append(' '.repeat(verse[k]), words);
    }
    root.append(p);
  }
});

element('scroll-rail', `
  :host{display:flex;flex-direction:column;width:15px;margin:2px 1px 2px 2px;background:#dadada}
  button{display:grid;place-items:center;height:15px;flex:none;background:#fff;border:1px solid #ababab}
  .up{transform:rotate(180deg)}
  .before{flex:48}.thumb{flex:503;background:#fff;border:1px solid #ababab}.after{flex:275}
`, '<button aria-label="Scroll up"><ui-caret class="up"></ui-caret></button><div class="before"></div><div class="thumb"></div><div class="after"></div><button aria-label="Scroll down"><ui-caret></ui-caret></button>');

element('word-document', `
  :host{flex:1;min-height:0;display:flex;background:#e6e6e6}
  .desk{flex:1;display:flex;flex-direction:column;align-items:center;overflow:hidden}
  poem-page{flex:none;width:654px}
  poem-page + poem-page{flex:1;border-top:1px solid #c6c6c6;padding-top:0}
`, '<div class="desk"><poem-page page="0"></poem-page><poem-page page="1" continued></poem-page></div><scroll-rail></scroll-rail>');

element('status-bar', `
  :host{display:flex;align-items:center;height:22px;background:#f0f0f0;border-top:1px solid #bebebe;padding:0 15px 0 7px}
  span{line-height:18px;height:20px}
  .words{margin:0 17px 0 20px}
  .space{flex:1}
  button{display:grid;place-items:center;width:38px;height:21px;flex:none}
  .proof{width:18px}
  .on{background:#c8c8c8}
  .sign{width:14px}
  input{appearance:none;width:100px;height:13px;margin:0 1px;background:linear-gradient(#999,#999) center/1px 5px no-repeat,linear-gradient(#aaa,#aaa) center/100% 1px no-repeat}
  input::-webkit-slider-thumb{appearance:none;width:4px;height:11px;background:#666;border-radius:0}
  .zoom{width:33px;text-align:right}
`, `<span>Page 1 of 2</span><span class="words">165 words</span><button class="proof" aria-label="Proofing"><ui-icon name="proof"></ui-icon></button><span class="space"></span>
  <button aria-label="Read mode"><ui-icon name="readmode"></ui-icon></button><button class="on" aria-label="Print layout"><ui-icon name="printlayout"></ui-icon></button><button aria-label="Web layout"><ui-icon name="weblayout"></ui-icon></button>
  <button class="sign" aria-label="Zoom out"><svg width="7" height="7"><path d="M0 3.500h7" stroke="#666" stroke-width="2"/></svg></button><input type="range" min="0" max="100" value="40" aria-label="Zoom"><button class="sign" aria-label="Zoom in"><svg width="8" height="8"><path d="M0 4h8M4 0v8" stroke="#666" stroke-width="2"/></svg></button><span class="zoom">80%</span>`);

element('task-app', `
  :host{display:block;width:48px;height:40px;margin-left:1px}
  button{display:grid;place-items:center;width:100%;height:100%;--icon:22px}
  :host([small]) button{--icon:19px}
  :host([open]) button{background:linear-gradient(#76b9ed,#76b9ed) bottom/40px 2px no-repeat}
  :host([active]) button{background:linear-gradient(#76b9ed,#76b9ed) bottom/48px 2px no-repeat #4c4d4f}
`, '<button></button>', (host, root) => {
  const b = root.querySelector('button');
  b.setAttribute('aria-label', host.getAttribute('icon'));
  b.innerHTML = `<ui-icon name="${host.getAttribute('icon')}"></ui-icon>`;
});

element('task-bar', `
  :host{display:flex;align-items:center;height:40px;background:#202124;color:#fff}
  .start{display:grid;place-items:center;width:48px;height:40px}
  .search{width:344px;height:40px;background:#333;padding:0 12px;font-size:14px}
  .search::placeholder{color:#9b9b9b;opacity:1}
  .space{flex:1}
  .tray{display:flex;align-items:center;gap:8px}
  .clock{width:64px;text-align:center;line-height:17px;margin:0 4px 2px 7px}
  .peek{width:4px;height:40px;border-left:1px solid #777}
`, `<button class="start" aria-label="Start"><ui-icon name="windows"></ui-icon></button><input class="search" type="text" placeholder="Search the web and Windows" aria-label="Search the web and Windows">
  <task-app small icon="taskview"></task-app><task-app open icon="edge"></task-app><task-app open icon="explorer"></task-app><task-app icon="store"></task-app><task-app icon="evernote"></task-app><task-app icon="keepass"></task-app><task-app open icon="chrome"></task-app><task-app open icon="skype"></task-app><task-app active icon="word"></task-app>
  <span class="space"></span><div class="tray"><ui-icon name="chevup"></ui-icon><ui-icon name="network"></ui-icon><ui-icon name="volume"></ui-icon><ui-icon name="notify"></ui-icon></div><div class="clock"><div>11:04 AM</div><div>8/5/2016</div></div><span class="peek"></span>`);

element('word-app', ':host{display:flex;flex-direction:column;height:100vh}', `
  <title-bar>Scissors - Word<span slot="user">John Johnston</span></title-bar>
  <ribbon-tabs></ribbon-tabs><word-ribbon></word-ribbon><word-document></word-document><status-bar></status-bar><task-bar></task-bar>`);
</script>
</body>
</html>
